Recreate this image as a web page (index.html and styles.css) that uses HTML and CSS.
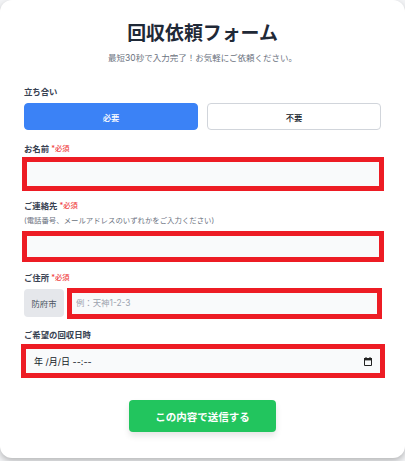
FILE: index.html
```
<!DOCTYPE html>
<html lang="ja">
<head>
<meta charset="utf-8">
<title>回収依頼フォーム</title>
<link rel="stylesheet" href="styles.css">
</head>
<body>
<main class="card">
  <h1 class="title">回収依頼フォーム</h1>
  <p class="lead">最短30秒で入力完了！お気軽にご依頼ください。</p>
  <form class="form">
    <div class="attend">
      <span class="label">立ち合い</span>
      <div class="choices">
        <button type="button" class="choice choice-on">必要</button>
        <button type="button" class="choice">不要</button>
      </div>
    </div>
    <div class="name-field">
      <label class="label">お名前 <span class="req">*必須</span></label>
      <input class="field name-input" type="text">
    </div>
    <div class="contact-field">
      <label class="label">ご連絡先 <span class="req">*必須</span></label>
      <p class="hint">(電話番号、メールアドレスのいずれかをご入力ください)</p>
      <input class="field contact-input" type="text">
    </div>
    <div class="address-field">
      <label class="label">ご住所 <span class="req">*必須</span></label>
      <div class="address-row">
        <span class="city">防府市</span>
        <input class="field address-input" type="text" placeholder="例：天神1-2-3">
      </div>
    </div>
    <div class="date-field">
      <label class="label">ご希望の回収日時</label>
      <div class="date-box">
        <span class="date-text">年 /月/日 --:--</span>
        <svg class="cal" width="8" height="9" viewBox="0 0 8 9" aria-hidden="true"><path d="M.5 1.5h7v7h-7z" fill="none" stroke="#222" stroke-width="1"/><rect x="0" y="1" width="8" height="2.4" fill="#222"/><path d="M2 0v1.5M6 0v1.5" stroke="#222" stroke-width="1"/></svg>
      </div>
    </div>
    <div class="actions"><button type="button" class="submit">この内容で送信する</button></div>
  </form>
</main>
</body>
</html>
```
FILE: styles.css
```
* { box-sizing: border-box; }
html, body { margin: 0; height: 100%; }
body {
  background: #f3f4f6;
  font-family: Inter, "Noto Sans CJK JP", sans-serif;
  color: #374151;
  overflow: hidden;
}
.card {
  width: 405px;
  height: 458px;
  background: #fff;
  border-radius: 12px;
  padding: 21px 24px 0;
  box-shadow: 0 3px 6px rgba(0,0,0,.25);
}
.title { margin: 0; font-size: 18.9px; line-height: 26px; font-weight: 700; text-align: center; color: #1f2937; }
.lead { margin: 4px 0 0; font-size: 8.5px; line-height: 14px; text-align: center; color: #6b7280; }
.form { margin-top: 20px; }
.label { display: flex; align-items: center; gap: 2px; height: 14px; font-size: 8.4px; line-height: 14px; font-weight: 700; color: #374151; }
.req { color: #ef4444; font-size: 7.3px; line-height: 14px; font-weight: 500; }
.choices { display: flex; gap: 9px; margin-top: 4px; }
.choice {
  flex: 1; height: 27px; padding: 0;
  background: #fff; border: 1px solid #d1d5db; border-radius: 4px;
  font: 500 8.4px Inter, "Noto Sans CJK JP", sans-serif; color: #111827;
}
.choice-on { background: #3b82f6; border-color: #3b82f6; color: #fff; }
.field {
  display: block;
  background: #f9fafb;
  border: 0; border-radius: 0;
  outline: 5px solid #ed1c24;
  font: 8.4px Inter, "Noto Sans CJK JP", sans-serif;
}
.field::placeholder { color: #9ca3af; }
.name-field { margin-top: 12px; }
.name-input { width: 352px; height: 24px; margin: 6px 0 0 3px; }
.contact-field { margin-top: 13px; }
.hint { margin: 1px 0 0; font-size: 7.4px; line-height: 14px; color: #6b7280; }
.contact-input { width: 352px; height: 21px; margin: 8px 0 0 3px; }
.address-field { margin-top: 14px; }
.address-row { display: flex; align-items: center; margin-top: 4px; }
.city {
  width: 40px; height: 28px;
  display: flex; align-items: center; justify-content: center;
  background: #e5e7eb; border-radius: 4px;
  font-size: 8.4px; color: #4b5563;
}
.address-input { width: 305px; height: 21px; margin-left: 8px; padding: 0 4px; }
.date-field { margin-top: 11px; }
.date-box {
  width: 354px; height: 24px; margin: 7px 0 0 2px;
  display: flex; align-items: center; justify-content: space-between;
  padding: 0 8px 0 8px;
  background: #f9fafb;
  outline: 5px solid #ed1c24;
}
.date-text { font-size: 9px; color: #111827; }
.cal { display: block; }
.actions { display: flex; justify-content: center; margin-top: 27px; }
.submit {
  width: 147px; height: 32px; padding: 0;
  background: #22c55e; border: 0; border-radius: 4px; color: #fff;
  font: 700 10.5px Inter, "Noto Sans CJK JP", sans-serif;
  box-shadow: 0 4px 6px rgba(0,0,0,.1);
}
```
